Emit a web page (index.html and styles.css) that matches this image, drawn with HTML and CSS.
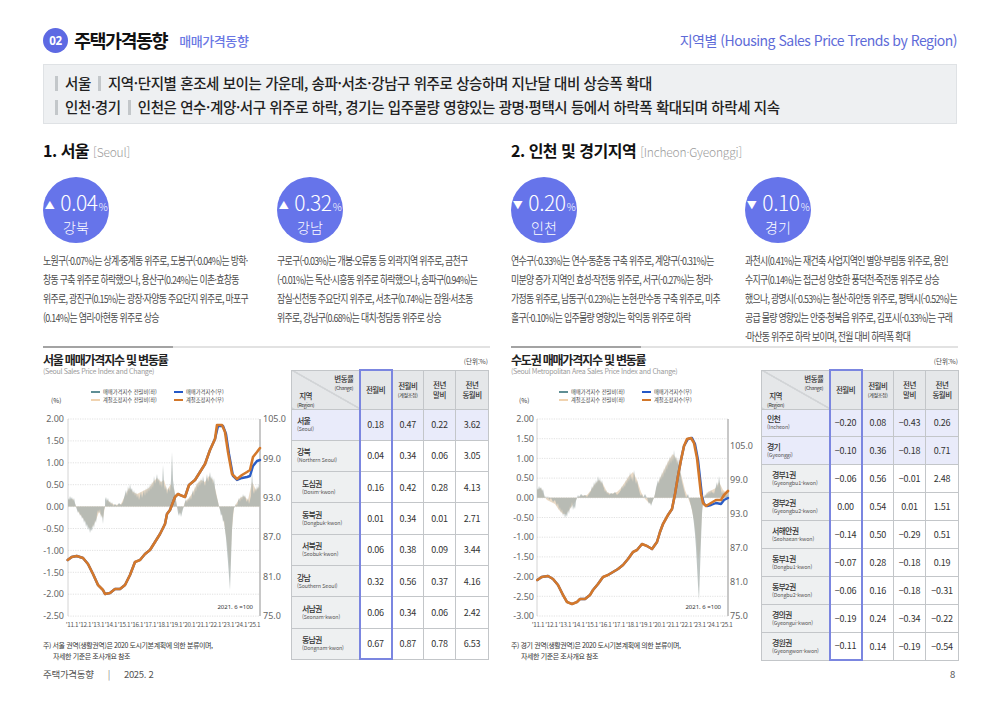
FILE: index.html
```html
<!DOCTYPE html>
<html lang="ko">
<head>
<meta charset="utf-8">
<title>주택가격동향 - 매매가격동향</title>
<link rel="stylesheet" href="styles.css">
</head>
<body>
<div class="page">
  <header class="top">
    <div class="top-left">
      <span class="num">02</span>
      <h1 class="title">주택가격동향</h1>
      <span class="subtitle">매매가격동향</span>
    </div>
    <div class="top-right">지역별 (Housing Sales Price Trends by Region)</div>
  </header>

  <section class="summary">
    <p><span class="bar"></span>서울<span class="bar mid"></span>지역·단지별 혼조세 보이는 가운데, 송파·서초·강남구 위주로 상승하며 지난달 대비 상승폭 확대</p>
    <p><span class="bar"></span>인천·경기<span class="bar mid"></span>인천은 연수·계양·서구 위주로 하락, 경기는 입주물량 영향있는 광명·평택시 등에서 하락폭 확대되며 하락세 지속</p>
  </section>

  <main class="content">
    <h2 class="sec-title">1. 서울 <span class="en">[Seoul]</span></h2>
    <h2 class="sec-title">2. 인천 및 경기지역 <span class="en">[Incheon·Gyeonggi]</span></h2>

    <div class="points">
      <div class="item">
        <div class="circle"><div class="v"><span class="tri">▲</span>0.04<span class="pc">%</span></div><div class="rg">강북</div></div>
        <p class="desc">노원구(-0.07%)는 상계·중계동 위주로, 도봉구(-0.04%)는 방학·<br>창동 구축 위주로 하락했으나, 용산구(0.24%)는 이촌·효창동<br>위주로, 광진구(0.15%)는 광장·자양동 주요단지 위주로, 마포구<br>(0.14%)는 염리·아현동 위주로 상승</p>
      </div>
      <div class="item">
        <div class="circle"><div class="v"><span class="tri">▲</span>0.32<span class="pc">%</span></div><div class="rg">강남</div></div>
        <p class="desc">구로구(-0.03%)는 개봉·오류동 등 외곽지역 위주로, 금천구<br>(-0.01%)는 독산·시흥동 위주로 하락했으나, 송파구(0.94%)는<br>잠실·신천동 주요단지 위주로, 서초구(0.74%)는 잠원·서초동<br>위주로, 강남구(0.68%)는 대치·청담동 위주로 상승</p>
      </div>
    </div>

    <div class="points">
      <div class="item">
        <div class="circle"><div class="v"><span class="tri">▼</span>0.20<span class="pc">%</span></div><div class="rg">인천</div></div>
        <p class="desc">연수구(-0.33%)는 연수·동춘동 구축 위주로, 계양구(-0.31%)는<br>미분양 증가 지역인 효성·작전동 위주로, 서구(-0.27%)는 청라·<br>가정동 위주로, 남동구(-0.23%)는 논현·만수동 구축 위주로, 미추<br>홀구(-0.10%)는 입주물량 영향있는 학익동 위주로 하락</p>
      </div>
      <div class="item">
        <div class="circle"><div class="v"><span class="tri">▼</span>0.10<span class="pc">%</span></div><div class="rg">경기</div></div>
        <p class="desc">과천시(0.41%)는 재건축 사업지역인 별양·부림동 위주로, 용인<br>수지구(0.14%)는 접근성 양호한 풍덕천·죽전동 위주로 상승<br>했으나, 광명시(-0.53%)는 철산·하안동 위주로, 평택시(-0.52%)는<br>공급 물량 영향있는 안중·청북읍 위주로, 김포시(-0.33%)는 구래<br>·마산동 위주로 하락 보이며, 전월 대비 하락폭 확대</p>
      </div>
    </div>

    <!-- Seoul chart + table -->
    <div class="chart-block">
      <div class="sep"></div>
      <div class="chart-grid">
        <div class="chart">
          <h3>서울 매매가격지수 및 변동률</h3>
          <p class="chart-sub">(Seoul Sales Price Index and Change)</p>
          <div class="legend-row">
            <span class="pct">(%)</span>
            <ul class="legend">
              <li><i class="sw sw-gray"></i>매매가격지수 전월비(좌)</li>
              <li><i class="sw sw-blue"></i>매매가격지수(우)</li>
              <li><i class="sw sw-beige"></i>계절조정지수 전월비(좌)</li>
              <li><i class="sw sw-orange"></i>계절조정지수(우)</li>
            </ul>
          </div>
          <svg class="plot" width="248" height="220" viewBox="0 0 248 220">
            <g class="grid">
              <line x1="25" x2="217" y1="9" y2="9"/>
              <line x1="25" x2="217" y1="30.9" y2="30.9"/>
              <line x1="25" x2="217" y1="52.8" y2="52.8"/>
              <line x1="25" x2="217" y1="74.7" y2="74.7"/>
              <line x1="25" x2="217" y1="96.6" y2="96.6"/>
              <line x1="25" x2="217" y1="118.5" y2="118.5"/>
              <line x1="25" x2="217" y1="140.4" y2="140.4"/>
              <line x1="25" x2="217" y1="162.3" y2="162.3"/>
              <line x1="25" x2="217" y1="184.2" y2="184.2"/>
              <line x1="25" x2="217" y1="206.1" y2="206.1"/>
            </g>
            <line class="axis-l" x1="25" y1="9" x2="25" y2="206"/>
            <line class="axis-r" x1="217" y1="9" x2="217" y2="206"/>
            <polygon class="bar-beige" points="25,96.6 25,90 30,89 33,96.6 36,103 40,108 44,114 47,119 50,116 53,110 56,102 60,108 62,96.6 64,90 68,93 72,95 78,94 82,86 86,78 90,82 94,84 98,82 102,80 106,78 110,72 114,68 118,72 121,70 124,80 128,74 131,80 134,96.6 137,104 140,98 142,92 146,88 150,82 154,74 158,70 162,72 166,66 170,70 173,82 176,96.6 179,104 182,118 185,140 187,160 189,118 191,98 193,94 197,88 201,86 205,90 209,72 213,80 217,76 217,96.6"/>
            <polygon class="bar-gray" points="25,96.6 25,88 26,90 27,86 28,89 29,87 30,91 31,88 32,93 33,96.6 34,100 35,103 36,101 37,106 38,104 39,109 40,107 41,113 42,110 43,117 44,114 45,120 46,117 47,123 48,119 49,121 50,114 51,118 52,110 53,113 54,104 55,100 56,103 57,99 58,108 59,104 60,114 61,100 62,96.6 62,90 63,87 64,91 65,88 66,93 67,91 68,95 69,92 70,96 72,94 74,96 76,93 78,95 80,92 81,88 82,84 83,80 84,86 85,76 86,82 87,74 88,80 89,78 90,84 91,80 92,86 93,82 94,88 95,84 96,90 97,86 98,82 99,88 100,84 101,80 102,86 103,78 104,84 105,76 106,82 107,74 108,80 109,72 110,78 111,66 112,74 113,70 114,64 115,72 116,68 117,76 118,70 119,78 120,55 121,74 122,80 123,76 124,84 125,80 126,78 127,82 128,70 129,42 130,70 131,78 132,84 133,90 134,96.6 135,103 136,106 137,102 138,107 139,103 140,99 141,96.6 142,92 143,89 144,93 145,88 146,91 147,86 148,90 149,84 150,80 151,86 152,76 153,82 154,72 155,78 156,70 157,76 158,68 159,74 160,66 161,72 162,76 163,70 164,64 165,72 166,68 167,62 168,70 169,66 170,74 171,68 172,78 173,84 174,88 175,92 176,96.6 177,100 178,106 179,104 180,112 181,110 182,120 183,128 184,140 185,152 186,166 187,180 188,150 189,120 190,104 191,98 192,96.6 193,94 194,96 195,91 196,88 197,92 198,86 199,90 200,84 201,88 202,85 203,90 204,92 205,88 206,94 207,90 208,86 209,60 210,80 211,84 212,78 213,82 214,76 215,80 216,74 217,78 217,96.6"/>
            <polyline class="ln-blue" points="24.7,150 28.7,147 33.7,146 40,148 45,154 50,164 55,175 60,180 62,184 67,183 72,179 77,179 82,175 87,165 92,152 97,150 102,144 107,140 112,132 117,124 122,114 124,104 127,100 132,87 135,84 137,85 142,87 146,75 152,70 157,62 162,54 167,40 172,29 175,16 180,16 183,24 186,44 190,66 194,70 199,68 204,67 207,66 210,56 214,51 217,50"/>
            <polyline class="ln-orange" points="24.7,150 28.7,147 33.7,146 40,148 45,154 50,164 55,175 60,180 62,184 67,183 72,179 77,179 82,175 87,165 92,152 97,150 102,144 107,140 112,132 117,124 122,114 124,104 127,100 132,87 135,84 137,85 142,87 146,75 152,70 157,62 162,54 167,40 172,29 174,15 179,15 182,22 185,42 189,64 194,69 199,65 204,62 207,60 210,47 214,42 217,38"/>
            <g class="yl">
              <text x="21" y="12.2">2.00</text>
              <text x="21" y="34.1">1.50</text>
              <text x="21" y="56">1.00</text>
              <text x="21" y="77.9">0.50</text>
              <text x="21" y="99.8">0.00</text>
              <text x="21" y="121.7">-0.50</text>
              <text x="21" y="143.6">-1.00</text>
              <text x="21" y="165.5">-1.50</text>
              <text x="21" y="187.4">-2.00</text>
              <text x="21" y="209.3">-2.50</text>
            </g>
            <g class="yr">
              <text x="220" y="12.2">105.0</text>
              <text x="220" y="51.6">99.0</text>
              <text x="220" y="91">93.0</text>
              <text x="220" y="130.4">87.0</text>
              <text x="220" y="169.8">81.0</text>
              <text x="220" y="209.2">75.0</text>
            </g>
            <g class="xl">
              <text x="29" y="216.5">’11.1</text>
              <text x="42" y="216.5">’12.1</text>
              <text x="55" y="216.5">’13.1</text>
              <text x="68" y="216.5">’14.1</text>
              <text x="81" y="216.5">’15.1</text>
              <text x="94" y="216.5">’16.1</text>
              <text x="107" y="216.5">’17.1</text>
              <text x="120" y="216.5">’18.1</text>
              <text x="133" y="216.5">’19.1</text>
              <text x="146" y="216.5">’20.1</text>
              <text x="159" y="216.5">’21.1</text>
              <text x="172" y="216.5">’22.1</text>
              <text x="185" y="216.5">’23.1</text>
              <text x="198" y="216.5">’24.1</text>
              <text x="211" y="216.5">’25.1</text>
            </g>
            <text class="base" x="210" y="199">2021. 6 =100</text>
          </svg>
          <p class="note">주) 서울 권역(생활권역)은 2020 도시기본계획에 의한 분류이며,<br><span class="ind">자세한 기준은 조사개요 참조</span></p>
        </div>
        <div class="tablewrap">
          <div class="unit">(단위:%)</div>
          <table class="tbl t8">
            <colgroup><col class="c1"><col class="c2"><col class="c2"><col class="c2"><col class="c3"></colgroup>
            <thead>
              <tr>
                <th class="diag"><div class="dg"><span class="d-top">변동률<small>(Change)</small></span><span class="d-bot">지역<small>(Region)</small></span></div></th>
                <th class="m">전월비</th>
                <th>전월비<small>(계절조정)</small></th>
                <th>전년<br>말비</th>
                <th>전년<br>동월비</th>
              </tr>
            </thead>
            <tbody>
              <tr class="hl"><td class="r"><b>서울</b><small>(Seoul)</small></td><td class="m">0.18</td><td>0.47</td><td>0.22</td><td>3.62</td></tr>
              <tr><td class="r"><b>강북</b><small>(Northern Seoul)</small></td><td class="m">0.04</td><td>0.34</td><td>0.06</td><td>3.05</td></tr>
              <tr><td class="r ind"><b>도심권</b><small>(Dosim-kwon)</small></td><td class="m">0.16</td><td>0.42</td><td>0.28</td><td>4.13</td></tr>
              <tr><td class="r ind"><b>동북권</b><small>(Dongbuk-kwon)</small></td><td class="m">0.01</td><td>0.34</td><td>0.01</td><td>2.71</td></tr>
              <tr><td class="r ind"><b>서북권</b><small>(Seobuk-kwon)</small></td><td class="m">0.06</td><td>0.38</td><td>0.09</td><td>3.44</td></tr>
              <tr><td class="r"><b>강남</b><small>(Southern Seoul)</small></td><td class="m">0.32</td><td>0.56</td><td>0.37</td><td>4.16</td></tr>
              <tr><td class="r ind"><b>서남권</b><small>(Seonam-kwon)</small></td><td class="m">0.06</td><td>0.34</td><td>0.06</td><td>2.42</td></tr>
              <tr><td class="r ind"><b>동남권</b><small>(Dongnam-kwon)</small></td><td class="m">0.67</td><td>0.87</td><td>0.78</td><td>6.53</td></tr>
            </tbody>
          </table>
        </div>
      </div>
    </div>

    <!-- Capital area chart + table -->
    <div class="chart-block">
      <div class="sep"></div>
      <div class="chart-grid r">
        <div class="chart">
          <h3>수도권 매매가격지수 및 변동률</h3>
          <p class="chart-sub">(Seoul Metropolitan Area Sales Price Index and Change)</p>
          <div class="legend-row">
            <span class="pct">(%)</span>
            <ul class="legend">
              <li><i class="sw sw-gray"></i>매매가격지수 전월비(좌)</li>
              <li><i class="sw sw-blue"></i>매매가격지수(우)</li>
              <li><i class="sw sw-beige"></i>계절조정지수 전월비(좌)</li>
              <li><i class="sw sw-orange"></i>계절조정지수(우)</li>
            </ul>
          </div>
          <svg class="plot" width="248" height="220" viewBox="0 0 248 220">
            <g class="grid">
              <line x1="26" x2="217" y1="9" y2="9"/>
              <line x1="26" x2="217" y1="28.7" y2="28.7"/>
              <line x1="26" x2="217" y1="48.4" y2="48.4"/>
              <line x1="26" x2="217" y1="68.1" y2="68.1"/>
              <line x1="26" x2="217" y1="87.8" y2="87.8"/>
              <line x1="26" x2="217" y1="107.5" y2="107.5"/>
              <line x1="26" x2="217" y1="127.2" y2="127.2"/>
              <line x1="26" x2="217" y1="146.9" y2="146.9"/>
              <line x1="26" x2="217" y1="166.6" y2="166.6"/>
              <line x1="26" x2="217" y1="186.3" y2="186.3"/>
              <line x1="26" x2="217" y1="206" y2="206"/>
            </g>
            <line class="axis-l" x1="26" y1="9" x2="26" y2="206"/>
            <line class="axis-r" x1="217" y1="9" x2="217" y2="206"/>
            <polygon class="bar-beige" points="26,87.8 26,80 30,78 33,86 36,90 40,92 44,94 48,100 52,104 55,104 58,100 61,96 64,92 66,87.8 70,86 76,85 80,80 84,74 88,70 92,74 96,82 100,84 106,82 110,78 114,72 118,66 122,62 126,70 130,82 133,87.8 137,92 140,94 143,87.8 146,76 150,66 154,58 158,50 162,44 166,50 170,64 174,80 177,87.8 180,96 183,110 185,126 187,150 189,140 191,100 193,87.8 197,82 201,80 205,78 208,72 212,80 217,84 217,87.8"/>
            <polygon class="bar-gray" points="26,87.8 26,78 27,80 28,76 29,79 30,77 31,81 32,79 33,84 34,87.8 35,86 36,89 37,86 38,90 40,88 42,92 44,90 46,96 47,93 48,100 49,97 50,103 51,99 52,106 53,102 54,108 55,104 56,107 57,100 58,104 59,96 60,99 61,92 62,100 63,96 64,99 65,91 66,87.8 67,85 68,87 70,84 72,86 74,85 76,87 78,84 80,81 81,76 82,79 83,72 84,76 85,70 86,74 87,66 88,72 89,68 90,74 91,70 92,76 93,78 94,82 95,80 96,84 97,82 98,85 100,83 102,84 104,82 106,85 108,83 110,80 111,76 112,79 113,74 114,77 115,70 116,74 117,66 118,72 119,62 120,70 121,66 122,72 123,60 124,68 125,74 126,70 127,76 128,80 129,84 130,86 131,84 132,87.8 133,86 134,84 135,86 136,87.8 137,91 138,94 139,92 140,96 141,93 142,90 143,87.8 144,84 145,78 146,74 147,70 148,74 149,66 150,70 151,62 152,68 153,58 154,64 155,54 156,60 157,50 158,56 159,46 160,54 161,44 162,52 163,40 164,50 165,46 166,54 167,48 168,56 169,60 170,66 171,72 172,76 173,80 174,84 175,87.8 176,86 177,84 178,87.8 179,92 180,96 181,100 182,106 183,114 184,124 185,138 186,156 187,175 188,190 189,160 190,130 191,104 192,92 193,87.8 194,84 195,86 196,82 197,85 198,81 199,84 200,80 201,83 202,82 203,84 204,80 205,76 206,72 207,78 208,66 209,74 210,80 211,84 212,81 213,85 214,82 215,86 216,84 217,85 217,87.8"/>
            <polyline class="ln-blue" points="26.3,170 30.7,167 37,166 42,169 47,175 52,185 56,192 61,194 66,192 69,189 74,189 79,185 82,180 87,174 92,167 97,165 102,162 107,159 112,155 117,149 122,142 126,140 131,134 136,136 141,139 146,132 149,122 152,114 157,105 161,99 164,84 167,66 170,50 173,36 177,29 181,28 184,34 187,50 189,68 191,86 193,94 196,96 200,95 205,93 210,94 213,90 217,88"/>
            <polyline class="ln-orange" points="26.3,170 30.7,167 37,166 42,169 47,175 52,185 56,192 61,194 66,192 69,189 74,189 79,185 82,180 87,174 92,167 97,165 102,162 107,159 112,155 117,149 122,142 126,140 131,134 136,136 141,139 146,132 149,122 152,114 157,105 161,99 164,84 167,66 170,50 173,36 176,29 180,28 183,33 186,48 188,66 190,84 192,93 195,96 200,93 205,90 210,90 213,85 217,81"/>
            <g class="yl">
              <text x="23" y="12.2">2.00</text>
              <text x="23" y="31.9">1.50</text>
              <text x="23" y="51.6">1.00</text>
              <text x="23" y="71.3">0.50</text>
              <text x="23" y="91">0.00</text>
              <text x="23" y="110.7">-0.50</text>
              <text x="23" y="130.4">-1.00</text>
              <text x="23" y="150.1">-1.50</text>
              <text x="23" y="169.8">-2.00</text>
              <text x="23" y="189.5">-2.50</text>
              <text x="23" y="209.2">-3.00</text>
            </g>
            <g class="yr">
              <text x="219" y="39.2">105.0</text>
              <text x="219" y="73.2">99.0</text>
              <text x="219" y="107.2">93.0</text>
              <text x="219" y="141.2">87.0</text>
              <text x="219" y="175.2">81.0</text>
              <text x="219" y="209.2">75.0</text>
            </g>
            <g class="xl">
              <text x="27" y="216.5">’11.1</text>
              <text x="40.5" y="216.5">’12.1</text>
              <text x="54" y="216.5">’13.1</text>
              <text x="67.4" y="216.5">’14.1</text>
              <text x="80.8" y="216.5">’15.1</text>
              <text x="94.3" y="216.5">’16.1</text>
              <text x="107.7" y="216.5">’17.1</text>
              <text x="121.2" y="216.5">’18.1</text>
              <text x="134.6" y="216.5">’19.1</text>
              <text x="148" y="216.5">’20.1</text>
              <text x="161.5" y="216.5">’21.1</text>
              <text x="175" y="216.5">’22.1</text>
              <text x="188.4" y="216.5">’23.1</text>
              <text x="201.9" y="216.5">’24.1</text>
              <text x="215.3" y="216.5">’25.1</text>
            </g>
            <text class="base" x="210" y="199">2021. 6 =100</text>
          </svg>
          <p class="note">주) 경기 권역(생활권역)은 2020 도시기본계획에 의한 분류이며,<br><span class="ind">자세한 기준은 조사개요 참조</span></p>
        </div>
        <div class="tablewrap">
          <div class="unit">(단위:%)</div>
          <table class="tbl t9">
            <colgroup><col class="c1"><col class="c2"><col class="c2"><col class="c2"><col class="c3"></colgroup>
            <thead>
              <tr>
                <th class="diag"><div class="dg"><span class="d-top">변동률<small>(Change)</small></span><span class="d-bot">지역<small>(Region)</small></span></div></th>
                <th class="m">전월비</th>
                <th>전월비<small>(계절조정)</small></th>
                <th>전년<br>말비</th>
                <th>전년<br>동월비</th>
              </tr>
            </thead>
            <tbody>
              <tr class="hl"><td class="r"><b>인천</b><small>(Incheon)</small></td><td class="m">−0.20</td><td>0.08</td><td>−0.43</td><td>0.26</td></tr>
              <tr class="hl"><td class="r"><b>경기</b><small>(Gyeonggi)</small></td><td class="m">−0.10</td><td>0.36</td><td>−0.18</td><td>0.71</td></tr>
              <tr><td class="r ind"><b>경부1권</b><small>(Gyeongbu1-kwon)</small></td><td class="m">−0.06</td><td>0.56</td><td>−0.01</td><td>2.48</td></tr>
              <tr><td class="r ind"><b>경부2권</b><small>(Gyeongbu2-kwon)</small></td><td class="m">0.00</td><td>0.54</td><td>0.01</td><td>1.51</td></tr>
              <tr><td class="r ind"><b>서해안권</b><small>(Seohaean-kwon)</small></td><td class="m">−0.14</td><td>0.50</td><td>−0.29</td><td>0.51</td></tr>
              <tr><td class="r ind"><b>동부1권</b><small>(Dongbu1-kwon)</small></td><td class="m">−0.07</td><td>0.28</td><td>−0.18</td><td>0.19</td></tr>
              <tr><td class="r ind"><b>동부2권</b><small>(Dongbu2-kwon)</small></td><td class="m">−0.06</td><td>0.16</td><td>−0.18</td><td>−0.31</td></tr>
              <tr><td class="r ind"><b>경의권</b><small>(Gyeongui-kwon)</small></td><td class="m">−0.19</td><td>0.24</td><td>−0.34</td><td>−0.22</td></tr>
              <tr><td class="r ind"><b>경원권</b><small>(Gyeongwon-kwon)</small></td><td class="m">−0.11</td><td>0.14</td><td>−0.19</td><td>−0.54</td></tr>
            </tbody>
          </table>
        </div>
      </div>
    </div>
  </main>

  <footer class="foot">
    <span>주택가격동향<span class="fsep">|</span>2025. 2</span>
    <span>8</span>
  </footer>
</div>
</body>
</html>
```

FILE: styles.css
```css
* { box-sizing: border-box; margin: 0; padding: 0; }
html, body { background: #fff; }
body {
  font-family: "Noto Sans CJK KR", "Noto Sans", sans-serif;
  color: #222;
  width: 1000px;
  height: 707px;
  overflow: hidden;
}
.page { padding: 27px 43px 0 43px; }

/* header */
.top { display: flex; justify-content: space-between; align-items: center; height: 26px; width: 914px; }
.top-left { display: flex; align-items: center; }
.num {
  width: 25px; height: 25px; border-radius: 50%;
  background: #5d69e3; color: #fff;
  font-family: "Noto Sans", sans-serif; font-weight: 700; font-size: 11.5px; line-height: 25px;
  text-align: center; letter-spacing: -0.3px;
}
.title { font-size: 18.5px; font-weight: 700; letter-spacing: -1.5px; margin-left: 6px; line-height: 26px; color: #111; }
.subtitle { font-size: 13px; font-weight: 500; color: #6a77e4; margin-left: 12px; letter-spacing: -0.4px; }
.top-right { font-size: 14px; color: #5e6bd8; letter-spacing: -0.5px; }

/* summary */
.summary {
  margin-top: 11px; height: 60px; width: 914px;
  background: #eef0f2; border: 1px solid #dfe2e5;
  padding: 6px 0 0 11px;
}
.summary p { font-size: 14.5px; line-height: 24px; font-weight: 500; letter-spacing: -0.4px; color: #222; white-space: nowrap; }
.bar { display: inline-block; width: 3px; height: 15px; background: #c3c7ca; vertical-align: -2px; margin-right: 7px; }
.bar.mid { margin-left: 7px; }

/* content */
.content { display: grid; grid-template-columns: 447px 447px; column-gap: 21px; margin-top: 17px; }
.sec-title { font-size: 16px; font-weight: 700; letter-spacing: -0.5px; line-height: 18px; color: #111; }
.sec-title .en { font-size: 12px; font-weight: 300; color: #9b9b9b; letter-spacing: -0.2px; }

.points { display: grid; grid-template-columns: 234px 213px; margin-top: 16px; }
.circle {
  width: 66px; height: 66px; border-radius: 50%;
  background: #6674ea; color: #fff;
  display: flex; flex-direction: column; align-items: center; justify-content: center;
  padding-top: 6px;
}
.circle .v { font-size: 21px; font-weight: 300; line-height: 22px; white-space: nowrap; letter-spacing: -0.4px; }
.circle .tri { font-size: 10px; margin-right: 6px; vertical-align: 2px; }
.circle .pc { font-size: 10px; margin-left: 1px; }
.circle .rg { font-size: 14px; font-weight: 300; line-height: 18px; }
.desc {
  margin-top: 8px;
  font-size: 11px; line-height: 19px; letter-spacing: -0.9px;
  color: #4a4a4a; white-space: nowrap;
  transform: scaleX(0.81); transform-origin: 0 0;
}

/* chart blocks */
.chart-block { margin-top: 0; }
.sep { height: 2px; background: linear-gradient(to right, #a3a3a3 0, #a3a3a3 130px, #e2e2e2 130px); }
.chart-grid { display: grid; grid-template-columns: 248px 197px; }
.chart-grid.r { grid-template-columns: 250px 197px; }
.chart h3 { margin-top: 5px; font-size: 12px; font-weight: 700; line-height: 14px; letter-spacing: -1.2px; color: #222; }
.chart-sub { font-size: 7px; color: #9a9a9a; line-height: 9px; letter-spacing: -0.3px; white-space: nowrap; }
.legend-row { margin-top: 12px; display: flex; align-items: flex-end; height: 16px; }
.pct { width: 48px; padding-left: 8px; font-size: 6.5px; line-height: 8px; color: #333; }
.legend { list-style: none; display: grid; grid-template-columns: 83px auto; }
.legend li { font-size: 5.3px; line-height: 8px; color: #444; display: flex; align-items: center; white-space: nowrap; }
.sw { display: inline-block; width: 9px; height: 2.5px; margin-right: 3px; }
.sw-gray { background: #5f8e94; }
.sw-blue { background: #2458c6; }
.sw-beige { background: #f0d3b0; }
.sw-orange { background: #d2772a; }

.plot { display: block; margin-top: 6px; }
.plot .grid line { stroke: #cdcdcd; stroke-width: 0.6; stroke-dasharray: 1.2 1.2; }
.plot .axis-l { stroke: #c9c9c9; stroke-width: 0.8; }
.plot .axis-r { stroke: #c8c8c8; stroke-width: 2; }
.plot .bar-beige { fill: #e8d6c0; opacity: 0.9; }
.plot .bar-gray { fill: #a7b0ad; opacity: 0.75; }
.plot .ln-blue { fill: none; stroke: #2a5cc4; stroke-width: 2.4; stroke-linejoin: round; stroke-linecap: round; }
.plot .ln-orange { fill: none; stroke: #d4782a; stroke-width: 2.6; stroke-linejoin: round; stroke-linecap: round; }
.plot .yl text { font-family: "Noto Sans", sans-serif; font-size: 9px; fill: #666; text-anchor: end; }
.plot .yr text { font-family: "Noto Sans", sans-serif; font-size: 9px; fill: #666; }
.plot .xl text { font-family: "Noto Sans CJK KR", sans-serif; font-size: 6.3px; fill: #555; text-anchor: middle; letter-spacing: -0.3px; }
.plot .base { font-family: "Noto Sans", sans-serif; font-size: 6px; fill: #333; text-anchor: end; }

.note { margin-top: 10px; font-size: 7px; line-height: 11px; letter-spacing: -0.4px; color: #333; white-space: nowrap; }
.note .ind { padding-left: 10px; }

/* tables */
.unit { margin-top: 9px; font-size: 6.5px; line-height: 8px; text-align: right; color: #444; }
.tbl { margin-top: 4px; width: 197px; border-collapse: collapse; table-layout: fixed; color: #333; }
.tbl col.c1 { width: 68px; }
.tbl col.c2 { width: 32px; }
.tbl col.c3 { width: 33px; }
.tbl th, .tbl td { border: 1px solid #c3c6c9; }
.tbl thead tr { height: 39px; }
.tbl th {
  background: #e5e7e9; font-size: 7.5px; font-weight: 500; line-height: 10px;
  letter-spacing: -0.5px; color: #333; text-align: center; vertical-align: middle;
}
.tbl th small { display: block; font-size: 5px; line-height: 7px; font-weight: 400; letter-spacing: -0.3px; }
.tbl th.diag {
  padding: 0;
  background: linear-gradient(to top right, transparent calc(50% - 0.5px), #a2a6aa 50%, transparent calc(50% + 0.5px)), #e5e7e9;
}
.dg { display: flex; flex-direction: column; justify-content: space-between; height: 37px; padding: 3px 5px 2px 5px; }
.d-top { align-self: flex-end; text-align: center; }
.d-bot { align-self: flex-start; text-align: center; }
.dg small { font-size: 4.8px; line-height: 6px; }
.t8 tbody tr { height: 31.3px; }
.t9 tbody tr { height: 27.9px; }
.tbl td { background: #fff; font-size: 9px; text-align: center; vertical-align: middle; letter-spacing: -0.2px; }
.tbl td.r { background: #eef0f1; text-align: left; padding-left: 5px; }
.tbl td.r.ind { padding-left: 10px; }
.tbl td.r b { display: block; font-size: 8px; font-weight: 500; line-height: 10px; letter-spacing: -0.8px; color: #333; }
.tbl td.r small { display: block; font-size: 5.3px; line-height: 7px; color: #555; letter-spacing: -0.1px; white-space: nowrap; }
.tbl tr.hl td { background: #e9ebfa; }
.tbl .m { border-left: 2px solid #7b86e0; border-right: 2px solid #7b86e0; }
.tbl thead .m { border-top: 2px solid #7b86e0; }
.tbl tbody tr:last-child .m { border-bottom: 2px solid #7b86e0; }

/* footer */
.foot {
  margin-top: 6px; width: 912px;
  display: flex; justify-content: space-between;
  font-size: 9.5px; line-height: 12px; color: #555; letter-spacing: -0.3px;
}
.fsep { margin: 0 14px; color: #888; }
```
